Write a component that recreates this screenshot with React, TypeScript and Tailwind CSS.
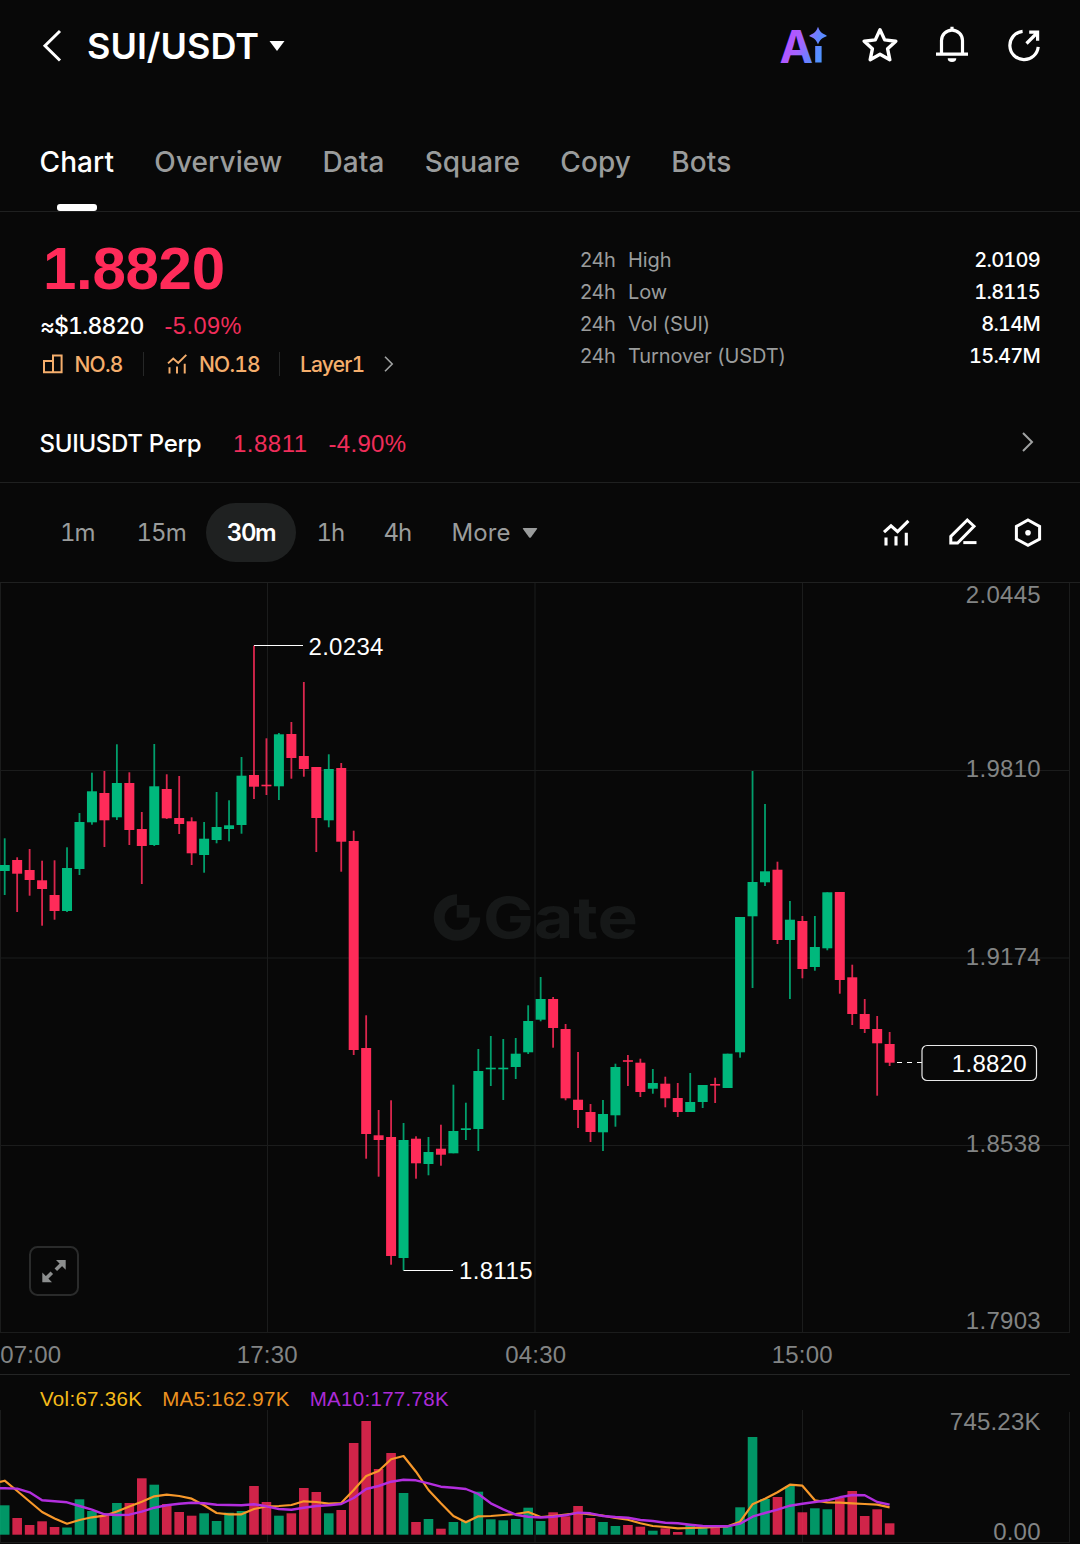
const tabs = ['Chart', 'Overview', 'Data', 'Square', 'Copy', 'Bots']

const stats = [
  { label: 'High', value: '2.0109' },
  { label: 'Low', value: '1.8115' },
  { label: 'Vol (SUI)', value: '8.14M' },
  { label: 'Turnover (USDT)', value: '15.47M' },
]

const UP = '#00b87c'
const DOWN = '#ff2b59'
const STEP = 12.464
const FIRST_X = 4.7

// [direction, body top, body bottom, wick top, wick bottom, volume bar top]
const candles: [number, number, number, number, number, number][] = [
  [1, 865, 871, 838.3, 895, 1505.3],
  [0, 860, 873.7, 857.3, 912, 1518],
  [0, 870, 880, 849, 895.7, 1525],
  [0, 880.3, 889, 860.7, 925.7, 1521.3],
  [0, 895, 911, 860.3, 919.7, 1527],
  [1, 868, 911, 847.3, 912, 1527.5],
  [1, 822, 869, 813, 875, 1499.3],
  [1, 791.3, 822.3, 772.7, 824.7, 1511],
  [0, 793, 820.3, 771, 847, 1515],
  [1, 783, 817.3, 744.3, 820, 1503],
  [0, 783, 830, 772.3, 845, 1503],
  [0, 829, 846, 812, 884, 1478.3],
  [1, 786.3, 845, 744, 846, 1484.7],
  [0, 789, 818.3, 774.3, 819, 1504],
  [0, 818, 824, 776, 834, 1512],
  [0, 821.3, 853.3, 817.3, 865, 1515.7],
  [1, 838.7, 855, 822, 872.7, 1513.3],
  [1, 827, 840, 792, 843.3, 1521],
  [1, 825.3, 829, 800.3, 841.3, 1512.7],
  [1, 775.7, 825, 757, 833.7, 1511],
  [0, 775, 786.7, 645.7, 799, 1486],
  [0, 784.7, 786.3, 738.3, 795, 1502],
  [1, 734.3, 786.3, 733, 800, 1515.7],
  [0, 734, 758, 722, 778.7, 1513.3],
  [0, 756, 769, 682, 776.7, 1488],
  [0, 767, 818, 767, 852, 1492],
  [1, 769, 820.3, 754.3, 827.3, 1513.3],
  [0, 768, 841.7, 763, 871.7, 1510],
  [0, 841, 1050, 830.7, 1055, 1443],
  [0, 1048, 1134, 1015.3, 1158.7, 1421],
  [0, 1135.3, 1140, 1110, 1176.7, 1469],
  [0, 1137, 1256, 1100.3, 1264.7, 1453],
  [1, 1140, 1258, 1123, 1270.3, 1493],
  [0, 1138.7, 1163.3, 1136.3, 1178.7, 1522],
  [1, 1152, 1164, 1137, 1175.3, 1519],
  [0, 1148.7, 1154.7, 1124.7, 1165.7, 1528.7],
  [1, 1131, 1153.3, 1084.7, 1153.3, 1522],
  [1, 1128.3, 1130, 1102.7, 1140, 1520.7],
  [1, 1071, 1129, 1049, 1151, 1491.7],
  [1, 1067.7, 1069.3, 1036, 1086, 1519.3],
  [1, 1067.7, 1069.3, 1039, 1100, 1520.3],
  [1, 1053.7, 1067, 1038, 1079, 1519],
  [1, 1021, 1052.3, 1005.3, 1054, 1507.7],
  [1, 999, 1019.7, 977, 1021.3, 1521],
  [0, 999, 1028, 997, 1047.7, 1512.3],
  [0, 1029, 1098.3, 1024, 1100.3, 1516.3],
  [0, 1099.7, 1110, 1052, 1128, 1506],
  [0, 1112, 1132, 1104, 1142, 1518],
  [1, 1114, 1132.3, 1100, 1151, 1522],
  [1, 1067, 1115.3, 1063.7, 1126.7, 1526],
  [0, 1060.2, 1061.8, 1055, 1086, 1525],
  [0, 1062.7, 1092, 1058.7, 1097, 1526.7],
  [1, 1083, 1088.7, 1069, 1093.7, 1530.7],
  [0, 1083.7, 1098.3, 1076.7, 1107.3, 1528.3],
  [0, 1098, 1112, 1083, 1117, 1532],
  [1, 1102, 1112, 1073, 1112, 1525],
  [1, 1085, 1102, 1085, 1108, 1528],
  [0, 1084, 1085.6, 1077.7, 1103, 1527.3],
  [1, 1053.7, 1088, 1053.7, 1088, 1526.7],
  [1, 917, 1052.3, 917, 1057.7, 1507.3],
  [1, 882, 916.3, 771, 988, 1437],
  [1, 871.3, 882.3, 804, 886, 1499],
  [0, 869.7, 940, 861.7, 944, 1497],
  [1, 919.7, 940, 901, 999, 1486],
  [0, 921, 969, 916, 978.3, 1512.3],
  [1, 947, 967, 916, 970.7, 1508.3],
  [1, 892.3, 948.3, 892.3, 950.3, 1509.3],
  [0, 892, 980, 892, 993.7, 1498],
  [0, 977.3, 1014, 964.7, 1025, 1491],
  [0, 1014, 1029, 999, 1033, 1516],
  [0, 1029, 1043.3, 1016, 1095.7, 1509.3],
  [0, 1044, 1062.7, 1032, 1066, 1523.3],
]

const ma5 = [
  1480.7, 1491, 1501.5, 1512, 1518.5, 1523.7, 1520, 1517.3, 1515.7, 1511.5, 1506.5, 1501.7, 1496.3, 1494.7, 1496,
  1498.7, 1505.3, 1513, 1514.3, 1514.3, 1509, 1506.5, 1506, 1505, 1501.3, 1502, 1503.7, 1503, 1490, 1476, 1471,
  1459.3, 1456, 1471.7, 1490, 1503.3, 1516, 1522.3, 1516.3, 1516, 1515, 1514, 1512, 1517, 1516, 1514.5, 1513, 1514.3,
  1515.7, 1518, 1519.7, 1523.3, 1526, 1527, 1528.3, 1528, 1527.7, 1527, 1526.3, 1521.7, 1504.3, 1498.7, 1492.3,
  1484.7, 1485.7, 1500.3, 1502.3, 1502.7, 1503.3, 1504, 1504.7, 1507.3,
]

const ma10 = [
  1488.3, 1488.6, 1492.3, 1500.3, 1501.3, 1502.3, 1506, 1509.7, 1514.3, 1515, 1514.7, 1511.7, 1507.7, 1505.3, 1503.7,
  1502.7, 1503.3, 1504.7, 1505, 1505.3, 1504.3, 1506.3, 1509, 1509.7, 1507.7, 1506, 1505.3, 1504, 1498, 1489, 1486,
  1481.7, 1479.7, 1480.3, 1483.3, 1486.7, 1487.7, 1489, 1494, 1503.3, 1509.3, 1514.7, 1516.7, 1517.5, 1516.7, 1515.3,
  1512.7, 1513.3, 1516, 1517, 1517.7, 1520, 1521, 1522.7, 1523.3, 1524.7, 1526, 1526.3, 1526.3, 1523.7, 1516.7, 1513,
  1509.7, 1505.7, 1503.7, 1502, 1500.3, 1497.3, 1495, 1495.3, 1502, 1504.7,
]

const candleX = (i: number) => FIRST_X + i * STEP

const toPoints = (start: number, values: number[]) =>
  [`0,${start}`, ...values.map((y, i) => `${candleX(i).toFixed(1)},${y}`)].join(' ')

function ChevronRight({ className }: { className: string }) {
  return (
    <svg viewBox="0 0 12 20" fill="none" stroke="currentColor" strokeWidth="2" className={className}>
      <path d="M1 1l9 9-9 9" />
    </svg>
  )
}

function TrendIcon({ className, strokeWidth }: { className: string; strokeWidth: number }) {
  return (
    <svg viewBox="0 0 32 32" fill="none" stroke="currentColor" strokeWidth={strokeWidth} className={className}>
      <path d="M4 15.2l7-6.4 6.6 5.8L28.4 3.8" />
      <path d="M6 20.4v8.2M16 19.2v9.4M26.3 15.8v12.8" />
    </svg>
  )
}

function Header() {
  return (
    <header className="flex h-[92px] items-center pl-[42px] pr-[38px]">
      <svg viewBox="0 0 20 34" className="h-[34px] w-5" fill="none" stroke="currentColor" strokeWidth="3">
        <path d="M18 2L3 16.7l15 14.8" />
      </svg>
      <h1 className="ml-[25px] text-[36px] font-semibold leading-none">SUI/USDT</h1>
      <svg viewBox="0 0 16 10" className="ml-[10px] h-[10px] w-4" fill="currentColor">
        <path d="M.5 0h15L8 10z" />
      </svg>

      <div className="ml-auto flex items-center">
        {/* AI assistant */}
        <svg viewBox="0 0 48 40" className="h-10 w-12 overflow-visible">
          <defs>
            <linearGradient id="ai" gradientUnits="userSpaceOnUse" x1="0" y1="8" x2="46" y2="26">
              <stop offset="0" stopColor="#c048ff" />
              <stop offset="0.45" stopColor="#a563ff" />
              <stop offset="0.75" stopColor="#6285ff" />
              <stop offset="1" stopColor="#4a97ff" />
            </linearGradient>
          </defs>
          <text x="-0.5" y="36.5" fill="url(#ai)" className="text-[45px] font-bold">A</text>
          <rect x="35.2" y="20" width="6.4" height="16.5" fill="url(#ai)" />
          <path d="M38 .8c1.6 4.6 3.4 6.6 8.6 8.6v.8c-5.2 2-7 3.8-8.6 8.4-1.6-4.6-3.4-6.4-8.6-8.4v-.8c5.2-2 7-4 8.6-8.6z" fill="url(#ai)" />
        </svg>
        <svg viewBox="0 0 36 40" className="ml-[34px] h-10 w-9" fill="none" stroke="currentColor" strokeWidth="3.4" strokeLinejoin="round">
          <path d="M18 3.8l4.7 10.1 11.1 1.3-8.2 7.6 2.2 10.9-9.8-5.4-9.8 5.4 2.2-10.9-8.2-7.6 11.1-1.3z" />
        </svg>
        <svg viewBox="0 0 36 40" className="ml-9 h-10 w-9" fill="none" stroke="currentColor" strokeWidth="3.2">
          <path d="M7.5 28V14.6a10.5 10.5 0 0 1 21 0V28" />
          <path d="M2 28.2h32M18 .8v3.5" />
          <path d="M13.7 32.2h8.6a4.3 3.8 0 0 1-8.6 0z" fill="currentColor" stroke="none" />
        </svg>
        <svg viewBox="0 0 36 40" className="ml-9 h-10 w-9" fill="none" stroke="currentColor" strokeWidth="3.2">
          <path d="M32.2 20.8A14.2 14.2 0 1 1 16.6 5.3" />
          <path d="M20.5 17.5L31 7M23.2 6.2h8.4v8.6" />
        </svg>
      </div>
    </header>
  )
}

function Tabs() {
  return (
    <nav className="flex h-[120px] gap-[40.2px] border-b border-[#1f2020] pl-[39.5px] pt-[50px] text-[28px] font-medium leading-10 tracking-[0.1px] text-[#9a9c9c]">
      {tabs.map((tab, i) => (
        <div key={tab} className="flex flex-col items-center">
          <span className={i === 0 ? 'text-white' : ''}>{tab}</span>
          {i === 0 && <span className="mt-[22px] h-[7px] w-10 rounded-[3px] bg-white" />}
        </div>
      ))}
    </nav>
  )
}

function Summary() {
  return (
    <section className="flex h-[193px] justify-between px-10 pt-[27px]">
      <div>
        <div className="pl-[3px] font-['Liberation_Sans',sans-serif] text-[60px] font-bold leading-[60px] tracking-[-0.3px] text-[#ff2b59]">1.8820</div>
        <div className="mt-[13px] flex items-baseline text-[23px] leading-7">
          <span className="w-[124.5px] font-medium tracking-[-0.85px] tabular-nums">≈$1.8820</span>
          <span className="font-['Liberation_Sans',sans-serif] text-[23.5px] tracking-[0.5px] text-[#f02d5a]">-5.09%</span>
        </div>
        <div className="mt-3 flex h-6 items-center text-[21px] font-medium leading-6 tracking-[-0.8px] tabular-nums text-[#f5ae6c]">
          <svg viewBox="0 0 20 20" className="ml-[2.5px] size-5" fill="none" stroke="currentColor" strokeWidth="2">
            <path d="M1 18.2V7h9v11.2zM10 18.2V1.6h8.6v16.6z" />
          </svg>
          <span className="ml-3 w-[68.5px] pt-0.5">NO.8</span>
          <span className="h-6 w-px bg-[#262727]" />
          <TrendIcon className="ml-[21px] size-[24px]" strokeWidth={2.6} />
          <span className="ml-[10px] w-20 pt-0.5">NO.18</span>
          <span className="h-6 w-px bg-[#262727]" />
          <span className="ml-5 w-[84px] pt-0.5">Layer1</span>
          <ChevronRight className="h-4 w-[10px] text-[#a0a2a2]" />
        </div>
      </div>

      <dl className="w-[460px] pt-[5px] text-[20px] leading-8">
        {stats.map((stat) => (
          <div key={stat.label} className="flex">
            <dt className="flex text-[#9a9c9c]">
              <span className="w-12 tracking-[-0.4px]">24h</span>
              <span className="tracking-[-0.1px]">{stat.label}</span>
            </dt>
            <dd className="ml-auto font-medium tracking-[-0.75px] tabular-nums">{stat.value}</dd>
          </div>
        ))}
      </dl>
    </section>
  )
}

function PerpRow() {
  return (
    <section className="flex h-[78px] items-center border-b border-[#1f2020] pl-[39.5px] pr-[46px] text-[24px] leading-8">
      <span className="w-[193.5px] font-medium tracking-[-0.3px]">SUIUSDT Perp</span>
      <span className="flex font-['Liberation_Sans',sans-serif] text-[#f02d5a]">
        <span className="w-[95.5px] tracking-[0.5px]">1.8811</span>
        <span className="tracking-[0.3px]">-4.90%</span>
      </span>
      <ChevronRight className="mb-1 ml-auto h-5 w-3 text-[#a0a2a2]" />
    </section>
  )
}

function Intervals() {
  return (
    <section className="flex h-[100px] items-center border-b border-[#1f2020] pl-[60px] pr-[36px] text-[24px] tracking-[-1px] tabular-nums text-[#9a9c9c]">
      <span className="w-[76.5px]">1m</span>
      <span className="w-[69.5px]">15m</span>
      <span className="flex h-[59px] w-[90px] items-center justify-center rounded-full bg-[#1f2121] font-semibold tracking-[-1.4px] text-white">30m</span>
      <span className="ml-[20.5px] w-[67px]">1h</span>
      <span className="w-[68px]">4h</span>
      <span className="tracking-[0.1px]">More</span>
      <svg viewBox="0 0 16 10" className="ml-[11.5px] h-[10px] w-4" fill="currentColor">
        <path d="M1.5 0h13q1.2 0 .5 1L9 9.3q-1 1-2 0L1 1Q.3 0 1.5 0z" />
      </svg>
      <div className="ml-auto flex items-center text-white">
        <TrendIcon className="size-8" strokeWidth={3.1} />
        <svg viewBox="0 0 32 32" className="ml-[35px] size-8" fill="none" stroke="currentColor" strokeWidth="3">
          <path d="M20.3 3l6.7 6.2L10.6 26H3.8v-6.6z" />
          <path d="M16.3 25.6h13.2" />
        </svg>
        <svg viewBox="0 0 32 32" className="ml-[33px] size-8" fill="none" stroke="currentColor" strokeWidth="3">
          <path d="M16 3l11.6 6.4V22L16 28.3 4.4 22V9.4z" />
          <circle cx="16" cy="15.7" r="2.8" fill="currentColor" stroke="none" />
        </svg>
      </div>
    </section>
  )
}

function PriceChart() {
  return (
    <svg viewBox="0 583 1080 792" className="block h-[792px] w-[1080px] overflow-visible font-['Liberation_Sans',sans-serif] text-[24px]">
      {/* Grid */}
      <path
        d="M0 770.5h1070M0 958h1070M0 1145.5h1070M0 1332.5h1070M.5 583v749M267.5 583v749M535 583v749M802.5 583v749M1069.5 583v749"
        stroke="#1b1c1c"
        fill="none"
      />
      <path d="M0 1374.5h1070" stroke="#242525" />

      {/* Watermark */}
      <path d="M474.8 917.5a17.8 17.8 0 1 1-17.8-17.8" fill="none" stroke="#161818" strokeWidth="11" />
      <rect x="456.7" y="905" width="12.6" height="12.6" fill="#161818" />
      <text x="483" y="938" textLength="155" lengthAdjust="spacingAndGlyphs" fill="#161818" className="font-['Inter'] text-[57px] font-bold">Gate</text>

      {candles.map(([up, top, bottom, high, low], i) => (
        <g key={i} fill={up ? UP : DOWN}>
          <rect x={candleX(i) - 0.9} y={high} width="1.8" height={low - high} opacity="0.85" />
          <rect x={candleX(i) - 5} y={top} width="10" height={bottom - top} />
        </g>
      ))}

      <g fill="#fff">
        <path d="M254 645.5h49M403.5 1270.5h49.5" stroke="#fff" strokeWidth="1.2" />
        <text x="308.5" y="655" className="tracking-[0.3px]">2.0234</text>
        <text x="459" y="1279" className="tracking-[0.4px]">1.8115</text>
      </g>

      {/* Last price */}
      <path d="M897 1062.5h25" stroke="#fff" strokeWidth="1.2" strokeDasharray="5 5" />
      <rect x="922" y="1045.5" width="114.5" height="35" rx="5" fill="#080808" stroke="#e8e8e8" strokeWidth="1.2" />
      <text x="1027" y="1072" textAnchor="end" fill="#fff" className="tracking-[0.3px]">1.8820</text>

      <g fill="#828484" textAnchor="end" className="tracking-[0.3px]">
        <text x="1041" y="603.3">2.0445</text>
        <text x="1041" y="777.3">1.9810</text>
        <text x="1041" y="965">1.9174</text>
        <text x="1041" y="1152.3">1.8538</text>
        <text x="1041" y="1329.3">1.7903</text>
      </g>
      <g fill="#828484" textAnchor="middle" className="tracking-[0.2px]">
        <text x="30.8" y="1363">07:00</text>
        <text x="267.3" y="1363">17:30</text>
        <text x="535.8" y="1363">04:30</text>
        <text x="802.3" y="1363">15:00</text>
      </g>

      {/* Fullscreen toggle */}
      <rect x="30" y="1247" width="48" height="48" rx="7.5" fill="#080808" stroke="#2a2b2b" strokeWidth="2" />
      <g fill="#8c8e8e" stroke="#8c8e8e">
        <path d="M56 1260h9.7v9.7zM42.3 1272.5v9.7h9.7z" stroke="none" />
        <path d="M62.5 1263.2l-6.7 6.5M45.5 1279l6.3-6.3" strokeWidth="3.6" />
      </g>
    </svg>
  )
}

function VolumeChart() {
  return (
    <section className="font-['Liberation_Sans',sans-serif]">
      <div className="flex h-[35px] items-center gap-5 pl-10 pt-[13px] text-[20.5px] leading-none tracking-[0.3px]">
        <span className="text-[#f5bb1b]">Vol:67.36K</span>
        <span className="text-[#ee9320]">MA5:162.97K</span>
        <span className="text-[#ab2bd6]">MA10:177.78K</span>
      </div>
      <svg viewBox="0 1410 1080 134" className="block h-[134px] w-[1080px] overflow-visible text-[24px]">
        <path d="M.5 1410v132M267.5 1410v132M535 1410v132M802.5 1410v132M1069.5 1412v130M0 1542.5h1070" stroke="#1b1c1c" fill="none" />
        {candles.map((c, i) => (
          <rect key={i} x={candleX(i) - 4.8} y={c[5]} width="9.6" height={1534.7 - c[5]} fill={c[0] ? UP : DOWN} opacity="0.81" />
        ))}
        <polyline points={toPoints(1482, ma5)} fill="none" stroke="#f7982a" strokeWidth="2.2" strokeLinejoin="round" />
        <polyline points={toPoints(1488.3, ma10)} fill="none" stroke="#b32ede" strokeWidth="2.4" strokeLinejoin="round" />
        <g fill="#828484" textAnchor="end" className="tracking-[0.2px]">
          <text x="1040.7" y="1430">745.23K</text>
          <text x="1040.7" y="1540">0.00</text>
        </g>
      </svg>
    </section>
  )
}

export default function App() {
  return (
    <main className="h-[1544px] w-[1080px] overflow-hidden bg-[#080808] font-['Inter',sans-serif] text-white">
      <Header />
      <Tabs />
      <Summary />
      <PerpRow />
      <Intervals />
      <PriceChart />
      <VolumeChart />
    </main>
  )
}
